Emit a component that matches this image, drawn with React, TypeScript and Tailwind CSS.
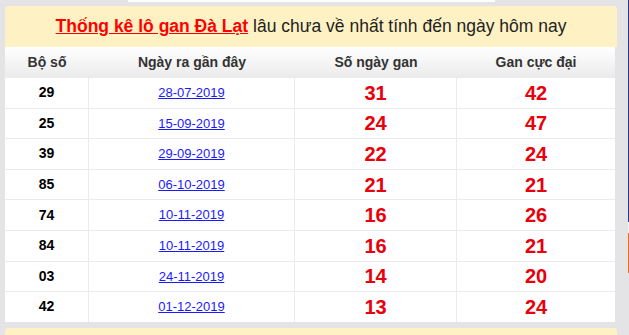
const rows = [
  { so: "29", ngay: "28-07-2019", gan: "31", max: "42" },
  { so: "25", ngay: "15-09-2019", gan: "24", max: "47" },
  { so: "39", ngay: "29-09-2019", gan: "22", max: "24" },
  { so: "85", ngay: "06-10-2019", gan: "21", max: "21" },
  { so: "74", ngay: "10-11-2019", gan: "16", max: "26" },
  { so: "84", ngay: "10-11-2019", gan: "16", max: "21" },
  { so: "03", ngay: "24-11-2019", gan: "14", max: "20" },
  { so: "42", ngay: "01-12-2019", gan: "13", max: "24" },
];

export default function App() {
  return (
    <div className="flex h-[335px] w-[629px] overflow-hidden bg-[#e4e4e6] font-['Liberation_Sans',Arial,sans-serif]">
      <div className="flex w-[628px] flex-col pl-[5px]">
        <div className="h-[3px] w-full">
          <div className="ml-[123px] h-[2px] w-[367px] bg-white" />
        </div>
        <div className="mt-[4px] flex w-[612px] flex-col">
          <div className="flex h-[41px] items-center justify-center rounded-t-[4px] bg-[#fef2c4] text-[17.5px] text-[#222]">
            <a className="font-bold text-[#f00] underline">Thống kê lô gan Đà Lạt</a>
            <span className="ml-[5px]">lâu chưa về nhất tính đến ngày hôm nay</span>
          </div>
          <div className="w-[610px]">
            <div className="flex h-[30px] bg-gradient-to-b from-white to-[#ebebeb] text-[14px] font-bold text-[#333]">
              <div className="flex w-[84px] items-center justify-center">Bộ số</div>
              <div className="flex w-[206px] items-center justify-center">Ngày ra gần đây</div>
              <div className="flex w-[162px] items-center justify-center">Số ngày gan</div>
              <div className="flex flex-1 items-center justify-center">Gan cực đại</div>
            </div>
            {rows.map((r, i) => (
              <div key={i} className="flex h-[30.6px] border-t border-[#ebebeb] bg-white">
                <div className="flex w-[84px] items-center justify-center border-r border-[#ebebeb] text-[14px] font-bold text-black">
                  {r.so}
                </div>
                <div className="flex w-[206px] items-center justify-center border-r border-[#ebebeb] text-[13px]">
                  <a className="text-[#1a1aff] underline">{r.ngay}</a>
                </div>
                <div className="flex w-[162px] items-center justify-center border-r border-[#ebebeb] text-[20px] font-bold text-[#e8000b]">
                  {r.gan}
                </div>
                <div className="flex flex-1 items-center justify-center text-[20px] font-bold text-[#e8000b]">
                  {r.max}
                </div>
              </div>
            ))}
          </div>
          <div className="mt-[6px] h-[20px] rounded-t-[4px] bg-[#fef2c4]" />
        </div>
      </div>
      <div className="flex w-[1px] flex-col">
        <div className="h-[222px] bg-[#2d3a8a]" />
        <div className="h-[11px] bg-[#f2f2f2]" />
        <div className="h-[40px] bg-[#f26b1d]" />
      </div>
    </div>
  );
}
